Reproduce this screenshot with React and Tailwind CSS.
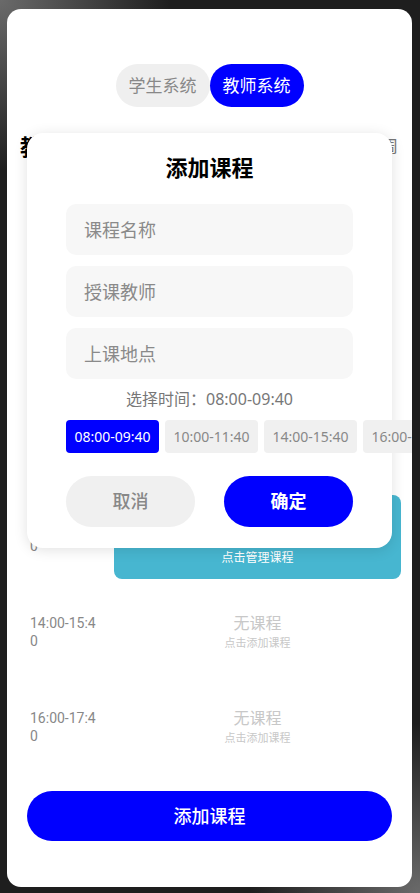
import React, { useState } from 'react';

const FONT = { fontFamily: '"Noto Sans", "Noto Sans CJK SC", sans-serif' };

const slots = ['08:00-09:40', '10:00-11:40', '14:00-15:40', '16:00-17:40'];

const schedule = {
    '10:00-11:40': { name: '高等数学', room: 'A101' },
};

const ScheduleRow = ({ time, course }) => (
    <div className="flex h-[84px] items-center">
        <div className="w-[84px] shrink-0">
            <div className="w-[70px] break-all text-[14px] leading-[18px] text-[#888]" style={{ fontFamily: 'Roboto, "Noto Sans CJK SC", sans-serif' }}>
                {time}
            </div>
        </div>
        {course ? (
            <div className="flex h-full flex-1 flex-col items-center justify-center rounded-[8px] bg-[#47b6d0] text-white">
                <div className="text-[16px] font-bold leading-[22px]">{course.name}</div>
                <div className="text-[12px] leading-[18px]">{course.room}</div>
                <div className="mt-[2px] text-[12px] leading-[18px]">点击管理课程</div>
            </div>
        ) : (
            <div className="flex flex-1 flex-col items-center justify-center">
                <div className="text-[16px] leading-[20px] text-[#c8c8c8]">无课程</div>
                <div className="mt-[2px] text-[11px] leading-[16px] text-[#c8c8c8]">点击添加课程</div>
            </div>
        )}
    </div>
);

const AddCourseDialog = ({ selected, onSelect }) => (
    <div className="absolute left-[20px] top-[124px] w-[365px] rounded-[16px] bg-white px-[39px] pb-[21px] pt-[20px] shadow-[0_2px_14px_rgba(0,0,0,0.12)]">
        <div className="text-center text-[22px] font-bold leading-[28px] text-black">添加课程</div>

        <div className="mt-[23px] flex flex-col gap-[11px]">
            {['课程名称', '授课教师', '上课地点'].map((p) => (
                <input
                    key={p}
                    placeholder={p}
                    className="h-[51px] w-full rounded-[10px] bg-[#f7f7f7] px-[18px] text-[18px] text-[#333] outline-none placeholder:text-[#8a8a8a]"
                    style={FONT}
                />
            ))}
        </div>

        <div className="mt-[9px] text-center text-[16px] leading-[22px] text-[#777]">选择时间：{selected}</div>

        <div className="mt-[10px] flex gap-[6px]">
            {slots.map((s) => (
                <button
                    key={s}
                    onClick={() => onSelect(s)}
                    className={`h-[33px] w-[93px] shrink-0 rounded-[4px] text-[14px] ${s === selected ? 'bg-[#0000ff] text-white' : 'bg-[#f0f0f0] text-[#888]'}`}
                    style={FONT}
                >
                    {s}
                </button>
            ))}
        </div>

        <div className="mt-[23px] flex justify-between">
            <button className="h-[51px] w-[129px] rounded-full bg-[#f0f0f0] text-[18px] font-medium text-[#888]" style={FONT}>取消</button>
            <button className="h-[51px] w-[129px] rounded-full bg-[#0000ff] text-[18px] font-bold text-white" style={FONT}>确定</button>
        </div>
    </div>
);

export default function App() {
    const [selected, setSelected] = useState('08:00-09:40');

    return (
        <div
            className="h-[893px] w-[420px] bg-[#1e1e1e] pb-[6px] pl-[7px] pr-[8px] pt-[9px] bg-[radial-gradient(circle_at_0_0,#6a6a6a_0,rgba(30,30,30,0)_170px),radial-gradient(circle_at_100%_100%,#6a6a6a_0,rgba(30,30,30,0)_170px)]"
            style={FONT}
        >
            <div className="relative flex h-full flex-col overflow-hidden rounded-[14px] bg-white">
                <div className="flex justify-center pt-[55px]">
                    <button className="h-[43px] rounded-full bg-[#efefef] px-[13px] text-[17px] text-[#888]">学生系统</button>
                    <button className="h-[43px] rounded-full bg-[#0000ff] px-[13px] text-[17px] text-white">教师系统</button>
                </div>

                <div className="mt-[24px] flex h-[30px] items-center justify-between pl-[13px] pr-[14px]">
                    <div className="text-[22px] font-bold text-black">教师课表</div>
                    <div className="text-[16px] text-[#777]">第1周</div>
                </div>

                <div className="mt-[239px] flex flex-col gap-[11px] pl-[23px] pr-[11px]">
                    {slots.map((t) => (
                        <ScheduleRow key={t} time={t} course={schedule[t]} />
                    ))}
                </div>

                <button className="mx-[20px] mt-[22px] h-[50px] rounded-full bg-[#0000ff] text-[18px] font-medium text-white">
                    添加课程
                </button>

                <AddCourseDialog selected={selected} onSelect={setSelected} />
            </div>
        </div>
    );
}
